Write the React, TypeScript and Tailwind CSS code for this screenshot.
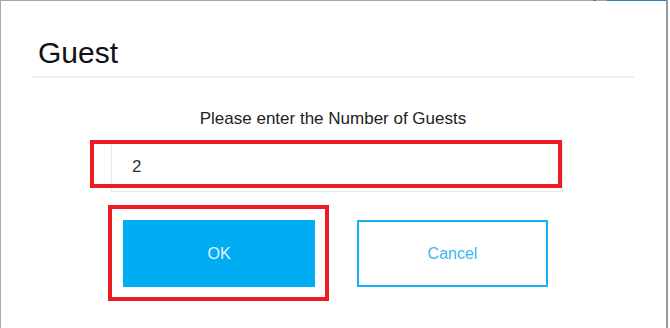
import React from "react";

export default function App() {
  return (
    <div
      className="relative w-[670px] h-[328px] bg-white overflow-hidden"
      style={{ fontFamily: '"Liberation Sans", Arial, sans-serif' }}
    >
      <div className="w-[668px] h-[328px] flex flex-col border-l border-l-[#a8a8a8] border-r-2 border-r-[#9a9a9a]">
        {/* top window edge */}
        <div className="flex h-px shrink-0">
          <div className="w-[592px] bg-[#a6a6a6]" />
          <div className="w-[3px] bg-[#707070]" />
          <div className="w-[11px] bg-[#a6a6a6]" />
          <div className="flex-1 bg-[#2b80bb]" />
        </div>

        <div className="flex flex-col px-[31px] pr-[32px]">
          <div className="mt-[37px] pl-[6px] text-[30px] leading-none text-[#111]">
            Guest
          </div>
          <div className="mt-[8px] h-[2px] bg-[#eeeeee]" />

          <div className="mt-[32px] text-center text-[17px] leading-none text-[#222]">
            Please enter the Number of Guests
          </div>

          <div className="mt-[15px] ml-[79px] w-[452px] h-[50px] border border-[#e8e8e8] flex items-center pl-[20px] text-[17px] text-[#333]">
            2
          </div>

          <div className="mt-[28px] ml-[91px] flex gap-[42px]">
            <button className="w-[192px] h-[67px] bg-[#00adf2] text-[#e4f5fd] text-[16px] flex items-center justify-center">
              OK
            </button>
            <button className="w-[191px] h-[67px] border-2 border-[#16b1f4] bg-white text-[#3db5f1] text-[16px] flex items-center justify-center">
              Cancel
            </button>
          </div>
        </div>
      </div>

      {/* red annotation boxes */}
      <div className="absolute left-[90px] top-[140px] w-[472px] h-[48px] border-4 border-[#ed1c24] pointer-events-none" />
      <div className="absolute left-[108px] top-[205px] w-[221px] h-[96px] border-4 border-[#ed1c24] pointer-events-none" />
    </div>
  );
}
